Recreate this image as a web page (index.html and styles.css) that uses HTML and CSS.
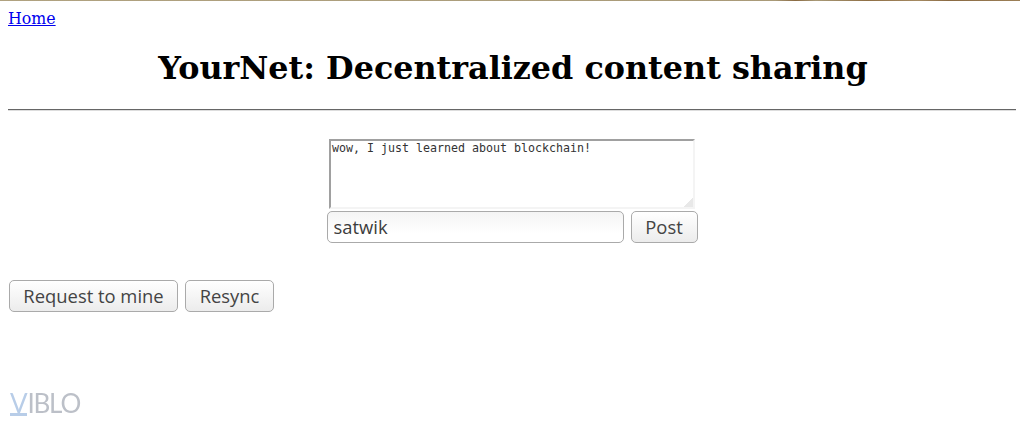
FILE: index.html
```html
<!DOCTYPE html>
<html lang="en">
<head>
    <meta charset="UTF-8">
    <meta name="viewport" content="width=device-width, initial-scale=1.0">
    <title>YourNet</title>
    <link rel="stylesheet" href="styles.css">
</head>
<body>
    <div class="top-strip"></div>
    <div class="page">
        <a class="home-link" href="#">Home</a>
        <h1>YourNet: Decentralized content sharing</h1>
        <hr>
        <form class="post-form">
            <textarea class="post-text">wow, I just learned about blockchain!</textarea>
            <div class="post-row">
                <input class="author" type="text" value="satwik">
                <button class="btn btn-post" type="button">Post</button>
            </div>
        </form>
        <div class="actions">
            <button class="btn btn-mine" type="button">Request to mine</button>
            <button class="btn btn-resync" type="button">Resync</button>
        </div>
        <div class="logo"><span class="logo-v">V</span>IBLO</div>
    </div>
</body>
</html>
```

FILE: styles.css
```css
html, body {
    margin: 0;
    background-color: #fff;
}
body {
    font-family: "DejaVu Serif", serif;
    font-size: 16px;
    overflow: hidden;
}
.top-strip {
    height: 1px;
    background: linear-gradient(90deg, #b0a280 0%, #a99a78 76%, #8a6a42 78%, #a99a78 80%, #8f6f45 85%, #a58a62 90%, #8a6a42 93%, #9c8058 100%);
}
.page {
    padding: 0 4px 0 8px;
}
.home-link {
    display: block;
    width: fit-content;
    margin-top: 8px;
    font-size: 15.8px;
    line-height: 19px;
    color: #00e;
}
h1 {
    margin: 21px 0 0;
    padding-left: 2px;
    font-size: 31.8px;
    line-height: 38px;
    text-align: center;
}
hr {
    margin: 22px 0 0;
    border: none;
    border-top: 1px solid #666;
    border-bottom: 1px solid #ddd;
}
.post-form {
    display: flex;
    flex-direction: column;
    align-items: center;
    margin-top: 28px;
}
.post-text {
    display: block;
    box-sizing: border-box;
    width: 366px;
    height: 70px;
    margin: 0 0 2px;
    padding: 0 1px;
    border: 2px solid;
    border-color: #a0a0a0 #f4f4f4 #f4f4f4 #a0a0a0;
    font-family: "DejaVu Sans Mono", monospace;
    font-size: 11.63px;
    line-height: 14px;
    color: #333;
    resize: none;
    background: linear-gradient(135deg, transparent 50%, #e8e8e8 50%) no-repeat right 0 bottom 0 / 9px 9px, #fff;
}
.post-row {
    display: flex;
    gap: 7px;
}
.author {
    box-sizing: border-box;
    width: 297px;
    height: 32px;
    padding: 0 6px 2px;
    border: 1px solid #aaa;
    border-radius: 5px;
    background: linear-gradient(#f4f4f4, #fff 70%);
    font-family: "Open Sans", sans-serif;
    font-size: 18.4px;
    color: #3c3c3c;
}
.btn {
    box-sizing: border-box;
    height: 32px;
    padding: 0 0 2px;
    border: 1px solid #aaa;
    border-radius: 5px;
    background: linear-gradient(#fff, #ececec);
    font-family: "Open Sans", sans-serif;
    font-size: 18.4px;
    color: #444;
}
.btn-post {
    width: 67px;
}
.btn-mine {
    width: 169px;
}
.btn-resync {
    width: 89px;
}
.actions {
    display: flex;
    gap: 7px;
    margin: 37px 0 0 1px;
}
.logo {
    margin: 82px 0 0 2px;
    font-family: "Lato", sans-serif;
    font-size: 26px;
    line-height: 19px;
    letter-spacing: -1.2px;
    color: #bcc0c8;
    filter: blur(0.3px);
}
.logo-v {
    display: inline-block;
    padding-right: 1px;
    color: #b8cde8;
    border-bottom: 3px solid #b8cde8;
}
```
